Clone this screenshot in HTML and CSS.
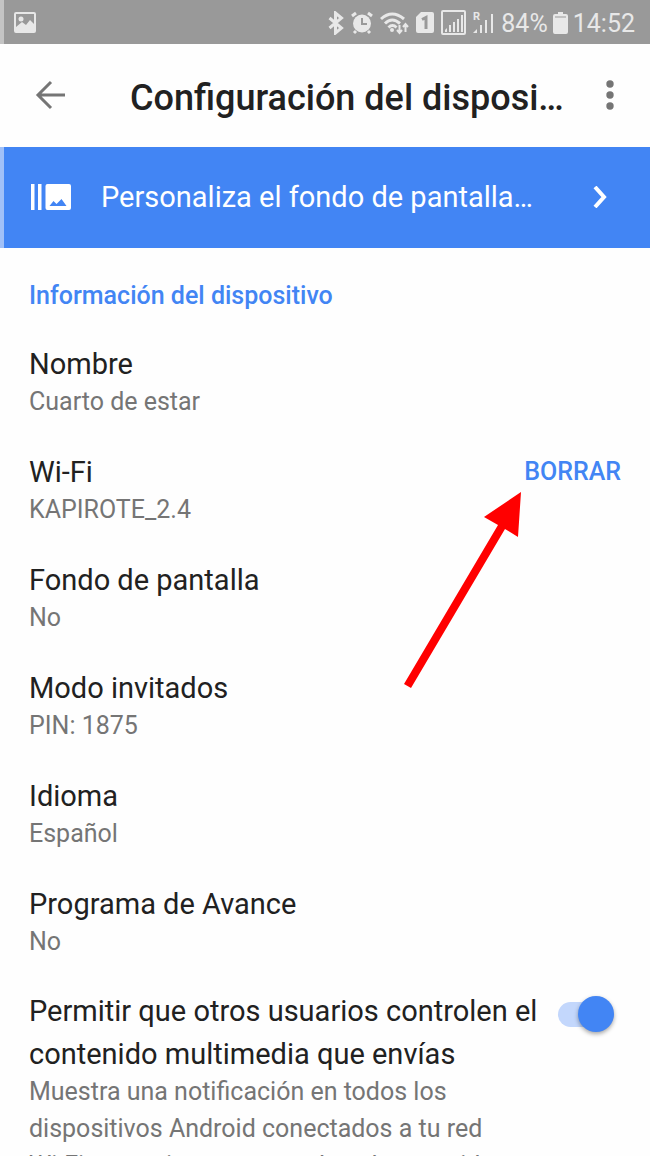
FILE: index.html
```
<!DOCTYPE html>
<html lang="es">
<head>
    <meta charset="UTF-8">
    <meta name="viewport" content="width=device-width, initial-scale=1.0">
    <title>Configuración del dispositivo</title>
    <link rel="stylesheet" href="styles.css">
</head>
<body>
    <div class="status-bar">
        <svg class="status-picture" width="22" height="22" viewBox="0 0 22 22">
            <path fill-rule="evenodd" d="M2 0h18a2 2 0 0 1 2 2v17a2 2 0 0 1-2 2H2a2 2 0 0 1-2-2V2a2 2 0 0 1 2-2zm0 2v13l6-5 4 3 4-5 4 4V2z"/>
            <circle cx="7" cy="7" r="2.5"/>
        </svg>
        <div class="status-icons">
            <svg width="16" height="24" viewBox="0 0 16 24">
                <path class="line" d="M1.500 7l12 10-6 5V2l6 5-12 10"/>
            </svg>
            <svg width="22" height="24" viewBox="0 0 22 24">
                <circle cx="11" cy="12.500" r="9"/>
                <path class="line" d="M1 5l4-3M21 5l-4-3M5 20l-2 2M17 20l2 2"/>
                <path class="cut thin" d="M11 7v6h5"/>
            </svg>
            <svg class="wifi" width="29" height="24" viewBox="0 0 29 24">
                <path class="line" d="M1 8q11-10 23 0M5 12.500q7-7 15 0M8.500 16.500q4-4 8 0"/>
                <circle cx="12" cy="19" r="2"/>
                <path class="line thin" d="M19.500 14v8M17 19l2.500 3 2.500-3M25.500 21v-8M23 16l2.500-3 2.500 3"/>
            </svg>
            <svg width="18" height="22" viewBox="0 0 18 22">
                <path d="M5 0h11a2 2 0 0 1 2 2v17a2 2 0 0 1-2 2H2a2 2 0 0 1-2-2V5z"/>
                <path class="cut" d="M6 7.500l4-2V17"/>
            </svg>
            <svg class="signal" width="25" height="26" viewBox="0 0 25 26">
                <rect class="line thin" x="1" y="1" width="23" height="23" rx="1"/>
                <path d="M4 22v-2l2-2v4zM8 15h2v7H8zM12 12h2v10h-2zM16 9h2v13h-2zM20 5h2v17h-2z"/>
            </svg>
            <svg width="21" height="24" viewBox="0 0 21 24">
                <text class="roaming" x="0" y="9">R</text>
                <path d="M0 22l4-4v4zM7 14h2v8H7zM12 9h2v13h-2zM18 3h2v19h-2z"/>
            </svg>
        </div>
        <span class="battery-level">84%</span>
        <svg width="15" height="22" viewBox="0 0 15 22">
            <path d="M5 0h5v2h3a2 2 0 0 1 2 2v16a2 2 0 0 1-2 2H2a2 2 0 0 1-2-2V4a2 2 0 0 1 2-2h3z"/>
            <path class="cut hair" d="M2 5h11"/>
        </svg>
        <span class="clock">14:52</span>
    </div>

    <header class="app-bar">
        <button class="icon-button" type="button" aria-label="Atrás">
            <svg width="30" height="30" viewBox="0 0 30 30">
                <path class="arrow-back" d="M30 15H3M16 2L3 15l13 13"/>
            </svg>
        </button>
        <h1>Configuración del dispositivo</h1>
        <button class="icon-button" type="button" aria-label="Más opciones">
            <svg width="8" height="30" viewBox="0 0 8 30">
                <circle cx="4" cy="4" r="3.700"/>
                <circle cx="4" cy="15" r="3.700"/>
                <circle cx="4" cy="26" r="3.700"/>
            </svg>
        </button>
    </header>

    <a class="banner" href="#fondo">
        <svg width="40" height="26" viewBox="0 0 40 26">
            <path fill-rule="evenodd" d="M0 0h3.500v26H0zM7 0h3.500v26H7zM16.500 0H38a2 2 0 0 1 2 2v22a2 2 0 0 1-2 2H16.500a2 2 0 0 1-2-2V2a2 2 0 0 1 2-2zm2 22h17l-5-7-5 5-3-3z"/>
        </svg>
        <span class="banner-text">Personaliza el fondo de pantalla de tu dispositivo</span>
        <svg width="14" height="22" viewBox="0 0 14 22">
            <path class="chevron" d="M2 1l9 10-9 10"/>
        </svg>
    </a>

    <main>
        <h2>Información del dispositivo</h2>
        <section class="item">
            <h3>Nombre</h3>
            <p>Cuarto de estar</p>
        </section>
        <section class="item with-action">
            <div>
                <h3>Wi-Fi</h3>
                <p>KAPIROTE_2.4</p>
            </div>
            <button class="text-button" type="button">BORRAR</button>
            <svg class="pointer" width="120" height="198" viewBox="0 0 120 198">
                <path d="M119 0l-3 45-13-8L9 196l-7-4L96 33l-14-8z"/>
            </svg>
        </section>
        <section class="item" id="fondo">
            <h3>Fondo de pantalla</h3>
            <p>No</p>
        </section>
        <section class="item">
            <h3>Modo invitados</h3>
            <p>PIN: 1875</p>
        </section>
        <section class="item">
            <h3>Idioma</h3>
            <p>Español</p>
        </section>
        <section class="item">
            <h3>Programa de Avance</h3>
            <p>No</p>
        </section>
        <section class="item with-switch">
            <div>
                <h3><label for="control">Permitir que otros usuarios controlen el contenido multimedia que envías</label></h3>
                <p>Muestra una notificación en todos los dispositivos Android conectados a tu red Wi-Fi y permite que controlen el contenido</p>
            </div>
            <input class="switch" id="control" type="checkbox" role="switch" checked>
        </section>
    </main>
</body>
</html>
```
FILE: styles.css
```
* {
    box-sizing: border-box;
}

body {
    margin: 0;
    height: 100vh;
    overflow: hidden;
    background-color: #fefefe;
    color: #212121;
    font-family: Roboto, sans-serif;
}

h1, h2, h3, p {
    margin: 0;
    font-weight: 400;
}

button {
    padding: 0;
    border: none;
    background: none;
    font-family: inherit;
    cursor: pointer;
}

svg {
    display: block;
    flex-shrink: 0;
    fill: currentColor;
}

/* Status bar */
.status-bar {
    display: flex;
    align-items: center;
    height: 44px;
    padding: 2px 15px 0 10px;
    border-left: 4px solid #c4c4c4;
    background-color: #999;
    color: #e8e8e8;
    font-size: 25px;
}

.status-icons {
    display: flex;
    align-items: center;
    gap: 7px;
    margin-left: auto;
}

.battery-level {
    margin: 0 5px 0 7px;
}

.clock {
    margin-left: 5px;
}

.line {
    fill: none;
    stroke: currentColor;
    stroke-width: 3;
}

.cut {
    fill: none;
    stroke: #999;
    stroke-width: 3;
}

.thin {
    stroke-width: 2;
}

.hair {
    stroke-width: 1;
}

.roaming {
    font-size: 11px;
    font-weight: 700;
}

/* App bar */
.app-bar {
    display: flex;
    align-items: center;
    height: 103px;
    padding: 0 36px 2px 35px;
}

.app-bar h1 {
    flex: 1;
    margin: 6px 32px 0 65px;
    overflow: hidden;
    text-overflow: ellipsis;
    white-space: nowrap;
    font-size: 36px;
    font-weight: 500;
    line-height: 48px;
}

.icon-button {
    color: #757575;
}

.arrow-back {
    fill: none;
    stroke: currentColor;
    stroke-width: 3;
}

/* Banner */
.banner {
    display: flex;
    align-items: center;
    height: 101px;
    padding: 0 43px 2px 27px;
    border-left: 4px solid #a0c0f8;
    background-color: #4285f4;
    color: #fff;
    font-size: 29px;
    text-decoration: none;
}

.banner-text {
    flex: 1;
    margin: 0 58px 0 30px;
    overflow: hidden;
    text-overflow: ellipsis;
    white-space: nowrap;
    line-height: 40px;
}

.chevron {
    fill: none;
    stroke: currentColor;
    stroke-width: 4;
}

/* Settings list */
main {
    padding: 30px 29px 0;
}

h2 {
    margin-bottom: 28px;
    color: #4285f4;
    font-size: 25px;
    font-weight: 500;
    line-height: 36px;
}

.item {
    position: relative;
    margin-bottom: 30px;
}

.item h3 {
    font-size: 29px;
    line-height: 44px;
}

.item p {
    margin-top: -3px;
    color: #757575;
    font-size: 25px;
    line-height: 37px;
}

.with-action,
.with-switch {
    display: flex;
    align-items: flex-start;
    justify-content: space-between;
}

.text-button {
    color: #4285f4;
    font-size: 25px;
    font-weight: 500;
    line-height: 44px;
}

/* Red arrow lying over the list, pointing at the button */
.pointer {
    position: absolute;
    top: 42px;
    right: 99px;
    z-index: 1;
    color: #f00;
}

.with-switch div {
    max-width: 510px;
}

.with-switch h3 {
    line-height: 43px;
}

.with-switch p {
    padding-right: 20px;
}

.switch {
    appearance: none;
    position: relative;
    flex-shrink: 0;
    width: 56px;
    height: 25px;
    margin: 12px 7px 0 0;
    border-radius: 13px;
    background-color: #c3d7fc;
    cursor: pointer;
}

.switch::before {
    content: "";
    position: absolute;
    top: -6px;
    left: 0;
    width: 36px;
    height: 36px;
    border-radius: 50%;
    background-color: #fafafa;
    box-shadow: 0 2px 4px rgba(0, 0, 0, 0.35);
}

.switch:checked::before {
    left: auto;
    right: 0;
    background-color: #4285f4;
}
```
